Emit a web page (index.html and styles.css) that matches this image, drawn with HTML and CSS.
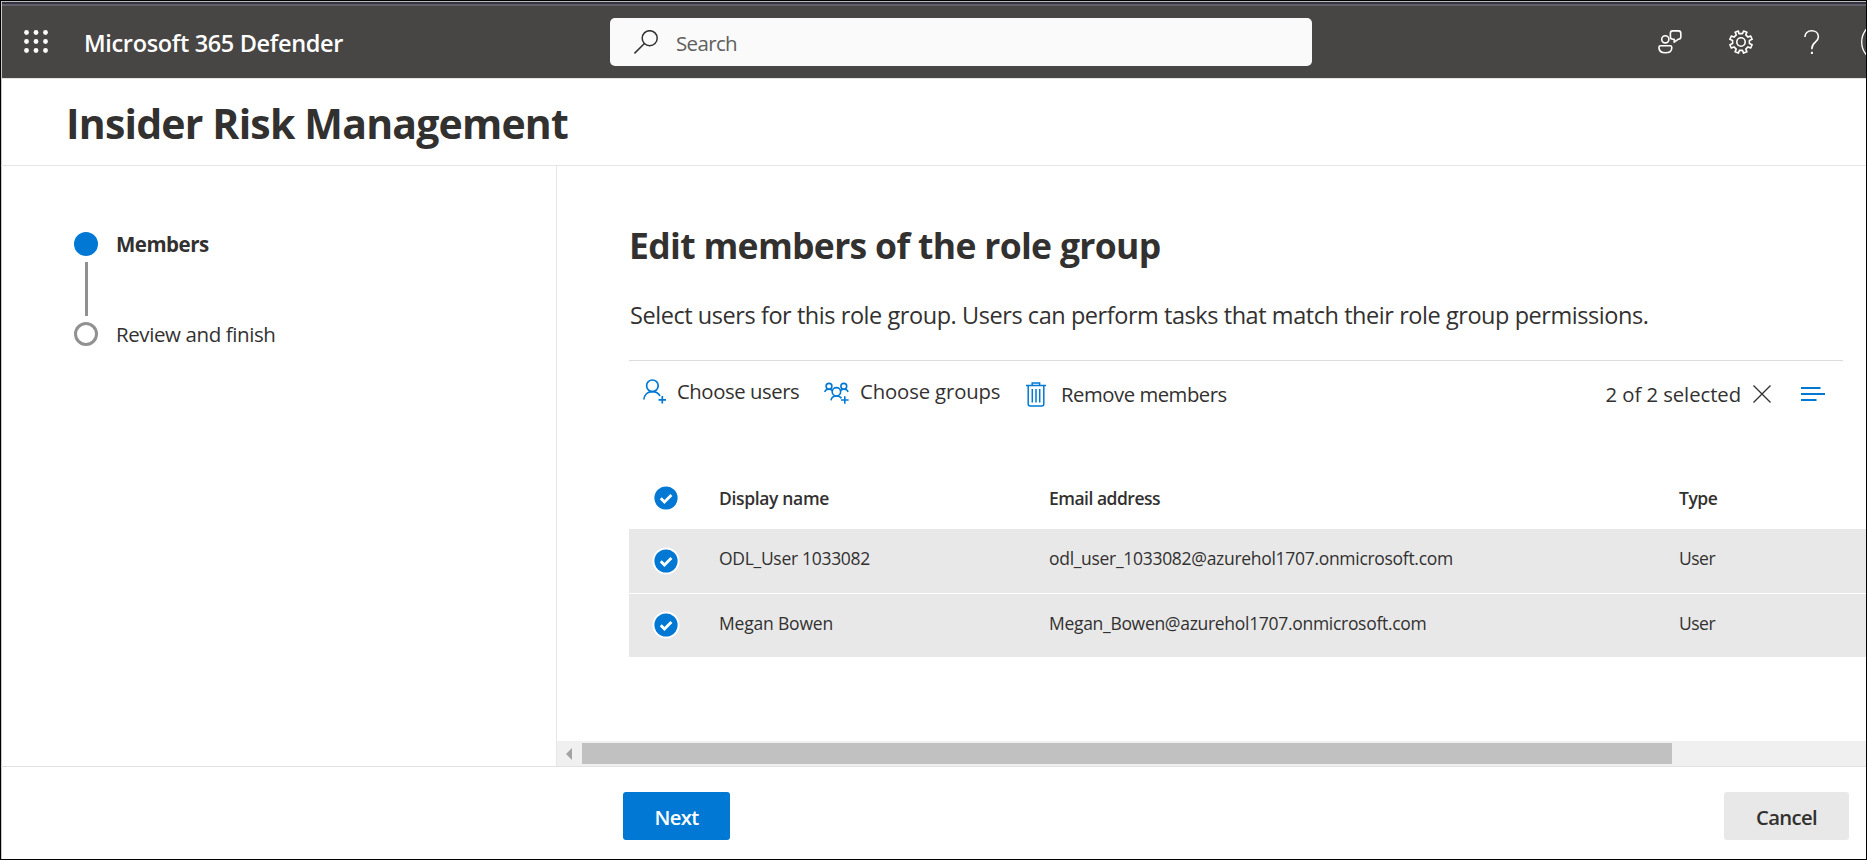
FILE: index.html
```html
<!DOCTYPE html>
<html lang="en">
<head>
<meta charset="utf-8">
<title>Insider Risk Management - Microsoft 365 Defender</title>
<link rel="stylesheet" href="styles.css">
</head>
<body>
<div class="app">
  <header class="topbar">
    <svg class="waffle" width="24" height="24" viewBox="0 0 24 24" fill="#fff">
      <circle cx="2.5" cy="2.5" r="2.4"/><circle cx="12" cy="2.5" r="2.4"/><circle cx="21.5" cy="2.5" r="2.4"/>
      <circle cx="2.5" cy="11.5" r="2.4"/><circle cx="12" cy="11.5" r="2.4"/><circle cx="21.5" cy="11.5" r="2.4"/>
      <circle cx="2.5" cy="20.5" r="2.4"/><circle cx="12" cy="20.5" r="2.4"/><circle cx="21.5" cy="20.5" r="2.4"/>
    </svg>
    <div class="product">Microsoft 365 Defender</div>
    <div class="search">
      <svg width="24" height="24" viewBox="0 0 24 24" fill="none" stroke="#323130" stroke-width="1.5">
        <circle cx="15.7" cy="8.2" r="7.5"/><path d="M10.4 13.5L.5 23.4"/>
      </svg>
      <span>Search</span>
    </div>
    <div class="tools">
      <svg class="feedback" width="24" height="24" viewBox="0 0 24 24" fill="none" stroke="#fff" stroke-width="1.6" stroke-linejoin="round">
        <circle cx="7.3" cy="9.3" r="3.6"/>
        <path d="M2.6 15.8H12.2Q13.8 15.8 13.8 17.4C13.8 20.6 11.4 22.8 7.4 22.8S.9 20.6.9 17.4Q.9 15.8 2.6 15.8Z"/>
        <path d="M14.5 .9H20.4Q22.8 .9 22.8 3.2V7Q22.8 9.2 20.4 9.2L16.2 12.2V9.2H15Q12.4 9.2 12.4 7V3.2Q12.4 .9 14.5 .9Z"/>
      </svg>
      <svg class="gear" width="24" height="24" viewBox="0 0 24 24" fill="none" stroke="#fff" stroke-width="1.6" stroke-linejoin="round">
        <path d="M9.9 3.7L9.4 1 6.1 2.2 7.3 4.9 5 7.1 2.3 6 .9 9.3 3.6 10.4V13.6L.9 14.7 2.3 18 5 16.9 7.2 19.1 6.1 21.8 9.4 23.1 10.5 20.4H13.5L14.6 23.1 17.9 21.8 16.8 19.1 19 16.9 21.7 18 23.1 14.7 20.4 13.6V10.4L23.1 9.3 21.7 6 19 7.1 16.8 4.9 17.9 2.2 14.6 1 13.5 3.6H10.5Z"/>
        <circle cx="12" cy="12" r="4.2"/>
      </svg>
      <svg class="help" width="16" height="24" viewBox="0 0 16 24" fill="none" stroke="#fff" stroke-width="1.6">
        <path d="M.9 7C.9 3.2 3.8.8 7.6.8S14.4 3.2 14.4 7C14.4 12.3 7.9 12 7.9 18.2V19.2"/><path d="M7.9 21.8V24" stroke-width="2"/>
      </svg>
      <svg class="account" width="5" height="36" viewBox="0 0 5 36" fill="none" stroke="#fff" stroke-width="1.3">
        <circle cx="20.7" cy="18" r="20"/>
      </svg>
    </div>
  </header>
  <div class="titlebar"><h1>Insider Risk Management</h1></div>
  <div class="body">
    <nav class="steps">
      <div class="step current"><i class="dot"></i><span>Members</span></div>
      <div class="connector"></div>
      <div class="step"><i class="dot"></i><span class="later">Review and finish</span></div>
    </nav>
    <main class="main">
      <div class="content">
        <h2>Edit members of the role group</h2>
        <p class="lead">Select users for this role group. Users can perform tasks that match their role group permissions.</p>
        <div class="commands">
          <svg class="add-user" width="24" height="25" viewBox="0 0 24 25" fill="none" stroke="#0078d4" stroke-width="1.7">
            <circle cx="9.4" cy="6.8" r="5.8"/><path d="M.9 20.5C1.3 15.8 4.5 12.6 9.4 12.6C13 12.6 15.6 14.2 17 16.9M19.3 17V24.5M15.5 20.8H23"/>
          </svg>
          <span class="users">Choose users</span>
          <svg class="add-group" width="25" height="25" viewBox="0 0 25 25" fill="none" stroke="#0078d4" stroke-width="1.6">
            <circle cx="5" cy="4.3" r="2.9"/><circle cx="19.8" cy="4.3" r="2.9"/><circle cx="12.4" cy="9.8" r="4.2"/>
            <path d="M.8 10C1.1 8.2 2.6 7.2 5 7.2C6.5 7.2 7.6 7.8 8.3 8.8M24 10C23.7 8.2 22.2 7.2 19.8 7.2C18.3 7.2 17.2 7.8 16.5 8.8M7 18.3C7.5 15.4 9.3 14 12.4 14C14.8 14 16.6 14.8 17.4 16.3M20.8 14.2V21.8M17 18H24.6"/>
          </svg>
          <span class="groups">Choose groups</span>
          <svg class="trash" width="20" height="25" viewBox="0 0 20 25" fill="none" stroke="#0078d4" stroke-width="1.5">
            <path d="M0 3.6H20M6.2 3.6V1H13.6V3.6M2.2 3.6V22Q2.2 24 4.2 24H15.8Q17.8 24 17.8 22V3.6M6.3 7V20.5M10 7V20.5M13.7 7V20.5"/>
          </svg>
          <span class="remove">Remove members</span>
          <span class="selected">2 of 2 selected</span>
          <svg class="clear" width="18" height="18" viewBox="0 0 18 18" stroke="#323130" stroke-width="1.3"><path d="M.5 .5L17.5 17.5M17.5 .5L.5 17.5"/></svg>
          <svg class="view" width="24" height="14" viewBox="0 0 24 14" stroke="#0078d4" stroke-width="2"><path d="M0 1H19.5M0 7H24M0 13H15.5"/></svg>
        </div>
        <div class="table">
          <div class="row head">
            <svg class="check" width="28" height="28" viewBox="0 0 28 28"><circle cx="14" cy="14" r="11.6" fill="#0078d4"/><path d="M8.8 14.3L12.4 17.9 19.4 10.9" fill="none" stroke="#fff" stroke-width="2.8"/></svg>
            <span>Display name</span><span class="tight">Email address</span><span class="tight">Type</span>
          </div>
          <div class="row item">
            <svg class="check" width="28" height="28" viewBox="0 0 28 28"><circle cx="14" cy="14" r="13.5" fill="#fff"/><circle cx="14" cy="14" r="11.6" fill="#0078d4"/><path d="M8.8 14.3L12.4 17.9 19.4 10.9" fill="none" stroke="#fff" stroke-width="2.8"/></svg>
            <span>ODL_User 1033082</span><span>odl_user_1033082@azurehol1707.onmicrosoft.com</span><span class="tight">User</span>
          </div>
          <div class="row item">
            <svg class="check" width="28" height="28" viewBox="0 0 28 28"><circle cx="14" cy="14" r="13.5" fill="#fff"/><circle cx="14" cy="14" r="11.6" fill="#0078d4"/><path d="M8.8 14.3L12.4 17.9 19.4 10.9" fill="none" stroke="#fff" stroke-width="2.8"/></svg>
            <span class="loose">Megan Bowen</span><span>Megan_Bowen@azurehol1707.onmicrosoft.com</span><span class="tight">User</span>
          </div>
        </div>
      </div>
      <div class="scrollbar">
        <svg width="6" height="12" viewBox="0 0 6 12"><path d="M6 0V12L0 6Z" fill="#a3a3a3"/></svg>
        <div class="thumb"></div>
      </div>
    </main>
  </div>
  <footer class="footer">
    <button class="next">Next</button>
    <button class="cancel">Cancel</button>
  </footer>
</div>
</body>
</html>
```

FILE: styles.css
```css
* { box-sizing: border-box; }
body {
  margin: 0;
  background: #fff;
  color: #323130;
  font-family: "Open Sans", "Noto Sans", sans-serif;
}
h1, h2, p { margin: 0; }
svg { display: block; flex: none; }
span { white-space: nowrap; }

.app {
  display: flex;
  flex-direction: column;
  width: 1867px;
  height: 860px;
  overflow: hidden;
  border: 1px solid #000;
  box-shadow: inset 1px 0 #c8c8c8;
}

/* Top bar */
.topbar {
  display: flex;
  align-items: center;
  height: 78px;
  margin-left: 1px;
  padding: 5px 0 1px 22px;
  background: linear-gradient(#b9b9bd 0 1px, #34323f 1px 3px, #62606b 3px 5px, #484644 5px 77px, #e4e3e2 77px);
  color: #fff;
}
.waffle { margin-top: -1px; }
.product {
  width: 526px;
  margin-left: 36px;
  padding-top: 1px;
  font-size: 23.5px;
  font-weight: 600;
  letter-spacing: -0.34px;
}
.search {
  display: flex;
  align-items: center;
  width: 702px;
  height: 48px;
  padding-left: 24px;
  border-radius: 5px;
  background: #fafafa;
  color: #605e5c;
  font-size: 20.5px;
  letter-spacing: -0.65px;
}
.search span { margin-left: 18px; padding-top: 2px; }
.tools { display: flex; align-items: center; margin-left: 346px; }
.gear { margin-left: 47px; }
.help { margin-left: 51px; }
.account { margin-left: 41px; }

.titlebar {
  height: 87px;
  padding: 16px 0 0 65px;
  border-bottom: 1px solid #e6e6e6;
}
h1 { font-size: 41px; line-height: 56px; font-weight: 700; letter-spacing: -0.81px; }

.body { display: flex; height: 600px; }

/* Wizard steps */
.steps {
  width: 556px;
  padding: 66px 0 0 73px;
  border-right: 1px solid #e6e6e6;
}
.step {
  display: flex;
  align-items: center;
  gap: 18px;
  height: 24px;
  font-size: 20.5px;
  letter-spacing: -0.4px;
}
.dot { width: 24px; height: 24px; border: 3px solid #919191; border-radius: 50%; }
.current { font-weight: 700; letter-spacing: -0.5px; }
.current .dot { border-color: #0078d4; background: #0078d4; }
.connector { width: 3px; height: 54px; margin: 6px 0 6px 11px; background: #919191; }

/* Main panel */
.main { display: flex; flex-direction: column; width: 1309px; }
.content { height: 575px; padding: 54px 0 0 72px; }
h2 { font-size: 35.5px; line-height: 50px; font-weight: 700; letter-spacing: -0.68px; }
.lead {
  margin-top: 29px;
  height: 61px;
  padding-left: 1px;
  font-size: 23.5px;
  line-height: 32px;
  letter-spacing: -0.44px;
}
.commands {
  display: flex;
  align-items: center;
  width: 1214px;
  height: 66px;
  border-top: 1px solid #dcdcdc;
  padding-left: 14px;
  font-size: 20.3px;
}
.add-user { margin-top: -5px; }
.users { width: 147px; margin: -6px 0 0 10px; letter-spacing: -0.42px; }
.add-group { margin-top: 2px; }
.groups { width: 166px; margin: -6px 0 0 11px; letter-spacing: -0.12px; }
.trash { margin-top: 1px; }
.remove { margin: 0 0 0 15px; letter-spacing: -0.47px; }
.selected { margin: 0 12px 0 auto; letter-spacing: -0.06px; }
.view { margin: 0 18px 0 30px; }

.table { margin-top: 40px; font-size: 17.5px; letter-spacing: -0.3px; }
.row {
  display: grid;
  grid-template-columns: 67.5px 330px 630px 1fr;
  align-items: center;
  padding-left: 22.5px;
}
.head { height: 63px; font-weight: 600; letter-spacing: -0.34px; }
.item { height: 64.5px; border-bottom: 1px solid #fff; background: #e8e8e8; }
.item span { margin-top: -5px; }
.tight { letter-spacing: -0.5px; }
.loose { letter-spacing: -0.19px; }

.scrollbar {
  display: flex;
  align-items: center;
  height: 25px;
  padding-left: 9px;
  background: #f0f0f0;
}
.thumb { width: 1090px; height: 21px; margin-left: 10px; background: #c1c1c1; }

/* Wizard actions */
.footer {
  display: flex;
  justify-content: space-between;
  align-items: flex-start;
  height: 93px;
  padding: 25px 17px 0 622px;
  border-top: 1px solid #e1e1e1;
}
button {
  height: 48px;
  padding: 1px 0 0;
  border: 0;
  border-radius: 3px;
  font: 600 20.3px "Open Sans", "Noto Sans", sans-serif;
  letter-spacing: -0.68px;
}
.next { width: 107px; background: #0078d4; color: #fff; }
.cancel { width: 125px; background: #e8e8e8; color: #323130; }
```
